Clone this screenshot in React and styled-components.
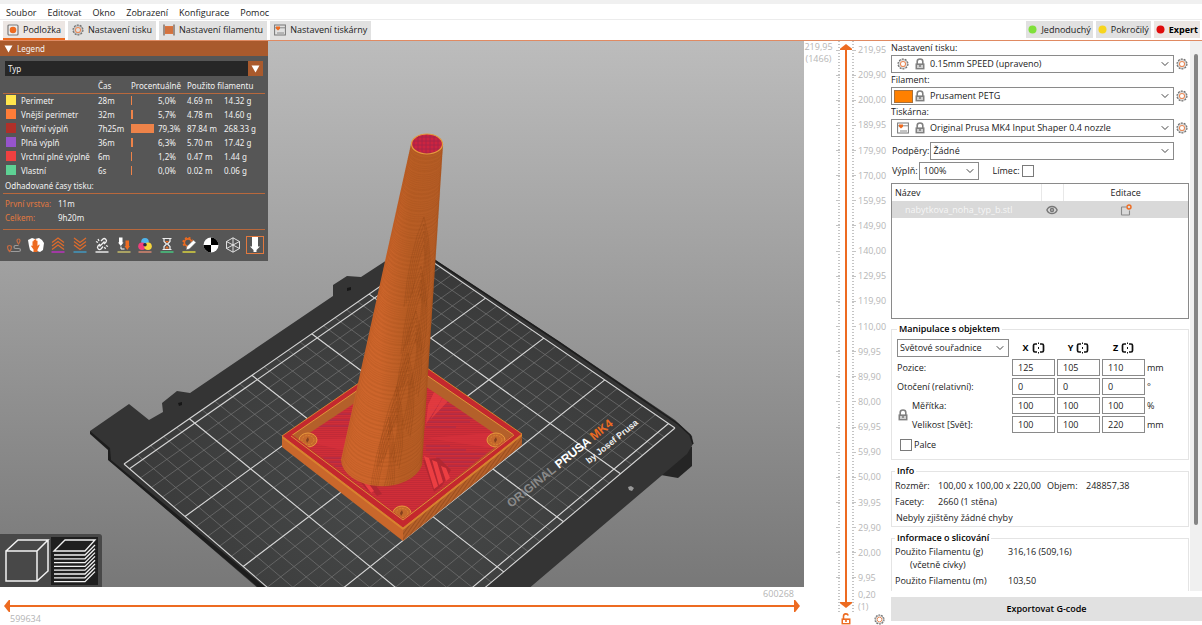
import React, { useState } from 'react';
import styled, { createGlobalStyle, css } from 'styled-components';
import { ChevronDown, Eye } from 'lucide-react';

const orange = '#ed6b21';

const GlobalStyle = createGlobalStyle`
  * { box-sizing: border-box; }
  body {
    margin: 0;
    background: #fff;
    color: #222;
    font-family: 'Open Sans', 'Noto Sans', sans-serif;
    font-size: 9px;
    line-height: 14px;
  }
  button, input, select { font: inherit; color: inherit; margin: 0; }
  button { border: 0; padding: 0; background: none; }
  ul { list-style: none; margin: 0; padding: 0; }
`;

const Page = styled.div`
  display: flex;
  flex-direction: column;
  height: 100vh;
  overflow: hidden;
`;

const TitleStrip = styled.div`
  flex: none;
  height: 4px;
  background: #f0f0f0;
`;

const MenuBar = styled.nav`
  flex: none;
  display: flex;
  gap: 11px;
  height: 16px;
  padding: 2px 6px 0;
  border-bottom: 1px solid #ececec;
  button { height: 13px; }
`;

const TabBar = styled.div`
  flex: none;
  display: flex;
  justify-content: space-between;
  height: 21px;
  padding: 1px 2px 0 3px;
  border-bottom: 1px solid #e08a62;
`;

const TabGroup = styled.div`
  display: flex;
  gap: 3px;
`;

const Tab = styled.button`
  display: flex;
  align-items: center;
  gap: 4px;
  padding: 0 4px;
  height: 19px;
  background: ${p => (p.$active ? '#ece6e3' : '#e1e1e1')};
  border-bottom: 2px solid ${p => (p.$active ? orange : '#e1e1e1')};
`;

const Mode = styled.button`
  display: flex;
  align-items: center;
  gap: 4px;
  height: 17px;
  padding: 0 2px;
  background: ${p => (p.$active ? '#ece6e3' : '#e1e1e1')};
  font-weight: ${p => (p.$active ? 700 : 400)};
  color: ${p => (p.$active ? '#000' : '#222')};
`;

const Body = styled.div`
  flex: 1;
  min-height: 0;
  display: grid;
  grid-template-columns: minmax(0, 1fr) 86px 312px;
`;

/* ---- 3D view ---- */

const ViewColumn = styled.main`
  display: flex;
  flex-direction: column;
  min-height: 0;
`;

const Canvas = styled.div`
  position: relative;
  flex: 1;
  min-height: 0;
  background: linear-gradient(#bcbcbc, #787878);
`;

const SceneSvg = styled.svg`
  display: block;
  width: 100%;
  height: 100%;
`;

const Legend = styled.section`
  position: absolute;
  left: 0;
  top: 0;
  width: 268px;
  padding-bottom: 7px;
  background: #565656;
  color: #f2f2f2;
  font-family: 'Noto Sans', sans-serif;
  font-size: 8px;
`;

const LegendHead = styled.button`
  display: flex;
  align-items: center;
  gap: 4px;
  width: 100%;
  height: 15px;
  padding: 0 4px;
  background: #a95a2d;
`;

const LegendSelect = styled.div`
  display: grid;
  grid-template-columns: 1fr 15px;
  margin: 5px 5px 2px;
  height: 15px;
  background: #272727;
  select {
    grid-area: 1 / 1 / 2 / 3;
    appearance: none;
    border: 0;
    padding: 0 3px;
    background: none;
    outline: none;
  }
  span {
    grid-area: 1 / 2;
    display: grid;
    place-items: center;
    background: #a95a2d;
    pointer-events: none;
  }
`;

const LegendTable = styled.table`
  width: 262px;
  margin: 0 3px;
  table-layout: fixed;
  border-collapse: collapse;
  th, td {
    padding: 0;
    height: 14px;
    line-height: 13px;
    font-weight: 400;
    text-align: left;
    white-space: nowrap;
  }
  thead th {
    border-bottom: 1px solid #b8683c;
    height: 15px;
  }
`;

const Swatch = styled.i`
  display: block;
  width: 10px;
  height: 10px;
  margin-left: 3px;
  background: ${p => p.$color};
`;

const Bar = styled.i`
  display: block;
  height: 9px;
  background: #ee8349;
`;

const LegendRule = styled.h4`
  margin: 0 3px;
  padding: 2px 2px 1px;
  border-bottom: 1px solid #b8683c;
  font-size: 8px;
  font-weight: 400;
  line-height: 13px;
`;

const Times = styled.dl`
  display: grid;
  grid-template-columns: 53px 1fr;
  margin: 0 3px;
  padding: 3px 2px 4px;
  border-bottom: 1px solid #b8683c;
  dt { color: #e2793f; }
  dd { margin: 0; }
`;

const ToolRow = styled.div`
  display: flex;
  justify-content: space-between;
  padding: 6px 4px 0 5px;
`;

const Tool = styled.button`
  display: block;
  width: 18px;
  height: 18px;
  border: 1px solid ${p => (p.$on ? '#e2793f' : 'transparent')};
  svg { display: block; width: 16px; height: 16px; }
`;

const ViewSwitch = styled.div`
  position: absolute;
  left: 0;
  bottom: 0;
  display: flex;
  gap: 1px;
  padding: 3px 4px 2px 3px;
  background: #484848;
  border-top-right-radius: 3px;
`;

const ViewButton = styled.button`
  width: 47px;
  height: 48px;
  background: ${p => (p.$active ? '#1f1f1f' : 'none')};
  svg { display: block; }
`;

const MoveBar = styled.div`
  flex: none;
  display: grid;
  grid-template-rows: 13px 12px 13px;
  padding: 0 4px;
  color: #b4b4b4;
  line-height: 13px;
`;

const MoveLabel = styled.span`
  padding: 0 6px;
  text-align: ${p => p.$align || 'left'};
`;

/* ---- sliders ---- */

const Dual = styled.div`
  display: grid;
  grid-template: 100% / 100%;
  min-height: 0;
  background: linear-gradient(${orange}, ${orange}) center no-repeat;
  background-size: ${p => (p.$vertical ? '2px 98%' : '99% 2px')};
`;

const Range = styled.input`
  grid-area: 1 / 1;
  appearance: none;
  width: 100%;
  height: 100%;
  min-width: 0;
  background: none;
  outline: none;
  pointer-events: none;
  ${p => p.$vertical && css`
    writing-mode: vertical-lr;
    direction: rtl;
  `}
  &::-webkit-slider-thumb {
    appearance: none;
    pointer-events: auto;
    width: ${p => (p.$vertical ? 12 : 6)}px;
    height: ${p => (p.$vertical ? 6 : 12)}px;
    background: ${orange};
    clip-path: ${p => p.$shape};
  }
`;

const shapes = {
  up: 'polygon(0 80%, 50% 0, 100% 80%, 100% 100%, 0 100%)',
  down: 'polygon(0 20%, 0 0, 100% 0, 100% 20%, 50% 100%)',
  left: 'polygon(80% 0, 0 50%, 80% 100%, 100% 100%, 100% 0)',
  right: 'polygon(20% 0, 0 0, 0 100%, 20% 100%, 100% 50%)',
};

const DualRange = ({ label, vertical }) => {
  const [low, setLow] = useState(0);
  const [high, setHigh] = useState(100);
  return (
    <Dual $vertical={vertical}>
      <Range type="range" $vertical={vertical} aria-label={`${label} min`} value={low}
        $shape={vertical ? shapes.down : shapes.left}
        onChange={e => setLow(Math.min(+e.target.value, high))} />
      <Range type="range" $vertical={vertical} aria-label={`${label} max`} value={high}
        $shape={vertical ? shapes.up : shapes.right}
        onChange={e => setHigh(Math.max(+e.target.value, low))} />
    </Dual>
  );
};

const LayerColumn = styled.aside`
  display: grid;
  grid-template-columns: 29px 1fr;
  grid-template-rows: minmax(0, 1fr) 12px;
  color: #b6b6b6;
  line-height: 12px;
`;

const CurrentLayer = styled.div`
  text-align: center;
  line-height: 12px;
`;

const LayerTrack = styled.div`
  display: grid;
  grid-template-columns: 4px 18px 1fr;
  grid-template-rows: 100%;
  min-height: 0;
`;

const TrackSlot = styled.div`
  grid-area: 1 / 2;
  display: grid;
  grid-template: 100% / 12px;
  justify-content: center;
  padding: 3px 0 5px;
  min-height: 0;
  border: solid transparent;
  border-width: 0 1px;
  background:
    repeating-linear-gradient(#c4c4c4 0 1px, transparent 1px 3px) left / 2px 100% no-repeat,
    repeating-linear-gradient(#c4c4c4 0 1px, transparent 1px 3px) right / 2px 100% no-repeat;
`;

const Scale = styled.ul`
  grid-area: 1 / 1 / 2 / 4;
  display: flex;
  flex-direction: column;
  justify-content: space-between;
  padding: 3px 0 29px;
`;

const ScaleItem = styled.li`
  display: grid;
  grid-template-columns: 4px 10px 4px 1fr;
  align-items: center;
  column-gap: 1px;
  padding-left: 3px;
  height: 12px;
  &::before, &::after {
    content: '';
    height: 1px;
    background: #c4c4c4;
  }
  &::before { grid-area: 1 / 1; }
  &::after { grid-area: 1 / 3; }
  span { grid-area: 1 / 4; padding-left: 1px; }
`;

const FirstLayer = styled.div`
  grid-area: 1 / 3;
  align-self: end;
  padding-left: 3px;
`;

const LayerFoot = styled.div`
  grid-column: 2;
  display: flex;
  justify-content: space-between;
  padding: 0 5px 0 7px;
  button { height: 12px; }
  svg { display: block; }
`;

/* ---- settings panel ---- */

const Side = styled.aside`
  display: grid;
  grid-template-rows: minmax(0, 1fr) 24px;
  row-gap: 6px;
  padding: 0 0 4px 1px;
  min-height: 0;
`;

const Scroller = styled.div`
  display: grid;
  grid-template-columns: minmax(0, 1fr) 12px;
  min-height: 0;
`;

const Settings = styled.div`
  overflow: hidden;
`;

const ScrollBar = styled.div`
  padding: 13px 4px 66px;
  background: #f0f0f0;
  i { display: block; height: 100%; background: #858585; border-radius: 2px; }
`;

const PresetLabel = styled.label`
  display: block;
  height: 14px;
`;

const PresetRow = styled.div`
  display: grid;
  grid-template-columns: 1fr 16px;
  align-items: center;
  button { justify-self: center; }
  svg { display: block; }
`;

const SelectBox = styled.div`
  display: grid;
  grid-template-columns: 1fr 14px;
  align-items: center;
  width: ${p => p.$width || 'auto'};
  height: 18px;
  border: 1px solid #8a8a8a;
  background: #fff;
  select {
    grid-area: 1 / 1 / 2 / 3;
    appearance: none;
    width: 100%;
    height: 16px;
    border: 0;
    padding: 0 14px 0 ${p => p.$pad || 2}px;
    background: none;
    outline: none;
  }
  > svg { grid-area: 1 / 2; pointer-events: none; }
`;

const PresetIcons = styled.span`
  grid-area: 1 / 1;
  display: grid;
  grid-template-columns: 20px 14px;
  align-items: center;
  justify-items: center;
  width: 34px;
  pointer-events: none;
  padding-left: 1px;
`;

const Color = styled.i`
  width: 19px;
  height: 13px;
  border: 1px solid #a8703a;
  background: #ff8000;
`;

const OptionRow = styled.div`
  display: flex;
  align-items: center;
  gap: 1px;
  padding: 0 16px 0 1px;
  margin-top: ${p => p.$top}px;
  > div.wide { flex: 1; }
`;

const CheckLabel = styled.label`
  display: flex;
  align-items: center;
  gap: 2px;
  margin-left: ${p => p.$left || 0}px;
`;

const Check = styled.input`
  appearance: none;
  width: 12px;
  height: 12px;
  border: 1px solid #7a7a7a;
  background: #fff;
  &:checked { background: ${orange}; }
`;

const ObjectList = styled.div`
  height: 136px;
  margin: 3px 1px 0 0;
  border: 1px solid #8a8a8a;
  table { width: 100%; table-layout: fixed; border-collapse: collapse; }
  th, td { height: 17px; padding: 0; line-height: 16px; text-align: center; font-weight: 400; }
  th + th { border-left: 1px solid #e8e8e8; }
  th:first-child, td:first-child { text-align: left; padding-left: 3px; }
  tbody { background: #d9d9d9; }
  tbody td:first-child { padding-left: 13px; color: #f6f6f6; }
  svg { vertical-align: middle; }
`;

const Group = styled.fieldset`
  margin: ${p => p.$top}px 1px 0 0;
  padding: 0 4px ${p => p.$bottom}px 3px;
  min-width: 0;
  border: 1px solid #e4e4e4;
  legend {
    padding: 0 2px;
    margin-left: ${p => p.$indent || 0}px;
    font-weight: 600;
    color: #000;
    height: 14px;
  }
`;

const Transform = styled.div`
  display: grid;
  grid-template-columns: 13px 98px repeat(3, 43px) 1fr;
  grid-template-rows: 18px repeat(4, 17px);
  gap: 2px;
  align-items: center;
  padding: 3px 0 0 2px;
  input { width: 100%; height: 17px; border: 1px solid #8a8a8a; padding: 0 5px; outline: none; }
`;

const Wide = styled.div`
  grid-column: 1 / 3;
`;

const Axis = styled.button`
  display: flex;
  align-items: center;
  gap: 3px;
  justify-content: center;
  font-weight: 700;
  color: #000;
`;

const LockCell = styled.button`
  grid-column: 1;
  grid-row: 4 / 6;
  svg { display: block; }
`;

const Facts = styled.dl`
  display: grid;
  grid-template-columns: ${p => p.$cols};
  margin: 0;
  line-height: ${p => p.$line}px;
  dd, dt { margin: 0; white-space: nowrap; }
`;

const Note = styled.p`
  margin: 0 0 0 ${p => p.$left}px;
  line-height: ${p => p.$line}px;
`;

const Export = styled.button`
  background: #e1e1e1;
  font-weight: 600;
  color: #000;
`;

/* ---- icons ---- */

const Gear = ({ size = 13 }) => (
  <svg width={size} height={size} viewBox="0 0 16 16" fill="none">
    <circle cx="8" cy="8" r="6.6" stroke="#6e6e6e" strokeWidth="1.6" strokeDasharray="2.6 1.5" />
    <circle cx="8" cy="8" r="5.6" stroke="#808080" strokeWidth="0.9" />
    <circle cx="8" cy="8" r="3.4" stroke="#e98a58" strokeWidth="1.4" />
  </svg>
);

const Lock = ({ color = '#808080', open }) => (
  <svg width="12" height="12" viewBox="0 0 12 12" fill="none">
    <path d={open ? 'M3.5 6V3.2A2.4 2.4 0 0 1 8.2 2.6' : 'M3.2 6V3.4a2.8 2.4 0 0 1 5.6 0V6'} stroke={color} strokeWidth="1.6" />
    <path d="M1.5 5.4h9v6h-9z" fill={color} />
    <path d="M3 7h6v3H3z" fill={open ? '#fff' : '#cfcfcf'} />
    <path d="M5.2 7h1.6v2H5.2z" fill={color} />
  </svg>
);

const BedIcon = () => (
  <svg width="12" height="12" viewBox="0 0 12 12">
    <rect x="1" y="1" width="10" height="10" rx="1" fill="#eee" stroke="#7a7a7a" strokeWidth="1.2" />
    <circle cx="6" cy="6" r="3.3" fill={orange} />
  </svg>
);

const SpoolIcon = () => (
  <svg width="12" height="12" viewBox="0 0 12 12">
    <path d="M1 .5v11M11 .5v11" stroke="#8a7a70" strokeWidth="1.6" />
    <rect x="2" y="2" width="8" height="8" fill="#dd7741" />
    <path d="M2 4h8M2 6h8M2 8h8" stroke="#b8683c" strokeWidth=".6" />
  </svg>
);

const PrinterIcon = () => (
  <svg width="12" height="12" viewBox="0 0 12 12" fill="none">
    <rect x=".6" y="1" width="10.8" height="10" stroke="#777" strokeWidth="1" />
    <path d="M.6 3.8h10.8M3 9h7" stroke="#888" strokeWidth="1" />
    <path d="M2 2.4h4v2.4L4 6.6 2 4.8z" fill={orange} />
  </svg>
);

const MirrorIcon = () => (
  <svg width="13" height="12" viewBox="0 0 13 12" fill="none" stroke="#111">
    <path d="M5 2H3Q1.500 2 1.500 3.500v5Q1.500 10 3 10h2M8 2h2q1.500 0 1.500 1.500v5Q11.500 10 10 10H8" strokeWidth="1.700" />
    <path d="M6.500 .5v1.500M6.500 5v2M6.500 10v1.500" strokeWidth="1" />
  </svg>
);

const EditIcon = () => (
  <svg width="12" height="12" viewBox="0 0 12 12" fill="none">
    <path d="M6.500 3H2q-.5 0-.5.500v7q0 .5.500.5h7q.5 0 .5-.5V6.500" stroke="#8a8a8a" strokeWidth="1.100" />
    <circle cx="9" cy="3" r="2" stroke={orange} strokeWidth="1.400" />
  </svg>
);

const Triangle = () => (
  <svg width="9" height="8" viewBox="0 0 9 8"><path d="M.5.5h8L4.500 7.500z" fill="#fff" /></svg>
);

const Underline = ({ color }) => <path d="M1.500 15h13" stroke={color} strokeWidth="1.400" />;

const tools = [
  ['Travel', <g fill="none" stroke="#9c9c9c" strokeWidth="1.200">
    <path d="M4.500 14.500h8q2 0 2-1.500t-2-1.500h-3q-1.500 0-1.500-1.500t1.500-1.500h3" />
    <path d="M3.500 14.500C1 11.500.8 8.500 3.500 8.500s2.500 3 0 6zM12.500 7c-2-2.500-2-5 0-5s2 2.500 0 5z" stroke="#c46a42" />
  </g>],
  ['Wipe', <g>
    <path d="M0 3l4-2 3 1 4-1 3 2 2 3-1 7-3 2-3-1-4 1-3-2-1-4z" fill="#fff" />
    <path d="M4.500 9V4.500q.7-.8 1.200 0V3q.8-.8 1.300 0v-.5q.8-.8 1.300 0V4q.8-.8 1.200 0v5l1.500-1.500q1 0 .5 1L9.500 12.500V15h-4v-2.500L3 9q.5-1 1.500 0z" fill={orange} />
  </g>],
  ['Retractions', <g>
    <path d="M2 5.500L8 1l6 4.500M2 9L8 4.500 14 9M2 12.500L8 8l6 4.500" fill="none" stroke="#dd6b2c" strokeWidth="1.300" />
    <Underline color="#c22fc4" />
  </g>],
  ['Deretractions', <g>
    <path d="M2 1l6 4.500L14 1M2 4.500L8 9l6-4.500M2 8l6 4.500L14 8" fill="none" stroke="#dd6b2c" strokeWidth="1.300" />
    <Underline color="#3f9dc8" />
  </g>],
  ['Seams', <g>
    <g fill="none" stroke="#f2f2f2" strokeWidth="1.300">
      <path d="M7 4l2-2c1.600-1.400 4.600 1 3 3l-2 2M9 9.500L7 12c-2 1.600-4.600-1-3-3l2-2M5.500 9.500l5-5" />
      <path d="M4 2l1 2M2 4.500l2 1M11.500 12l-1-2M14 9.500l-2-1" />
    </g>
    <Underline color="#f2f2f2" />
  </g>],
  ['Tool changes', <g>
    <path d="M3 .5h3.500v5h1L4.800 9 2 5.500h1z" fill="#fff" />
    <path d="M9.500 3.500H13v5.500h1l-2.700 4L8.500 9h1z" fill={orange} />
    <path d="M5 9.500v2.500h3.500" stroke="#fff" fill="none" />
    <Underline color="#cfc36a" />
  </g>],
  ['Color changes', <g>
    <circle cx="8" cy="4.800" r="3.800" fill="#4fb4ec" />
    <circle cx="5" cy="9.200" r="3.800" fill="#ef3f7c" />
    <circle cx="11" cy="9.200" r="3.800" fill="#f6d53c" />
    <circle cx="8" cy="7.700" r="1.800" fill="#2b2440" />
    <Underline color="#e08a72" />
  </g>],
  ['Pause', <g>
    <path d="M3.500 1.500h9M3.500 12.500h9M5 2v2.500L7.500 7 5 9.500V12M11 2v2.500L8.500 7 11 9.500V12" stroke="#eee" strokeWidth="1.200" fill="none" />
    <path d="M6 4h4L8 6zM6 11.500L8 9l2 2.500z" fill={orange} />
    <Underline color="#45cf83" />
  </g>],
  ['Custom G-code', <g>
    <circle cx="7" cy="5.500" r="3.600" stroke={orange} strokeWidth="1.600" fill="none" />
    <circle cx="7" cy="5.500" r="4.800" stroke={orange} strokeWidth="1.600" strokeDasharray="2 1.770" fill="none" />
    <path d="M5 13l.8-3.500L12.500 3l2.500 2.500L8.500 12z" fill="#fff" stroke="#565656" strokeWidth=".6" />
    <Underline color="#e3dc3e" />
  </g>],
  ['Center of gravity', <g>
    <circle cx="8" cy="8" r="7.500" fill="#fff" />
    <path d="M8 8V.5A7.500 7.500 0 0 1 15.500 8zM8 8v7.500A7.500 7.500 0 0 1 .5 8z" fill="#000" />
  </g>],
  ['Shells', <path d="M8 .8l6.500 3.700v7L8 15.200l-6.500-3.700v-7zM8 .8v14.400M1.500 4.500l13 7M14.500 4.500l-13 7" fill="none" stroke="#eee" strokeWidth=".9" />],
  ['Tool marker', <path d="M5 0h6v9.500h2L9.500 13v2h-3v-2L3 9.500h2z" fill="#fff" />],
];

/* ---- scene ---- */

// bed corners on the canvas: front left, front right, back right, back left
const corners = [[375, 680], [675, 428], [424, 256], [124, 464]];

const makeProjection = ([a, b, c, d]) => {
  const dx1 = b[0] - c[0], dx2 = d[0] - c[0], sx = a[0] - b[0] + c[0] - d[0];
  const dy1 = b[1] - c[1], dy2 = d[1] - c[1], sy = a[1] - b[1] + c[1] - d[1];
  const det = dx1 * dy2 - dx2 * dy1;
  const g = (sx * dy2 - dx2 * sy) / det;
  const h = (dx1 * sy - sx * dy1) / det;
  return (x, y) => {
    const u = x / 250, v = y / 210;
    const w = g * u + h * v + 1;
    return [
      ((b[0] - a[0] + g * b[0]) * u + (d[0] - a[0] + h * d[0]) * v + a[0]) / w,
      ((b[1] - a[1] + g * b[1]) * u + (d[1] - a[1] + h * d[1]) * v + a[1]) / w,
    ].map(n => n.toFixed(1));
  };
};

const project = makeProjection(corners);
const seg = (x1, y1, x2, y2) => `M${project(x1, y1)}L${project(x2, y2)}`;
const range = (n, fn) => Array.from({ length: n }, (_, i) => fn(i));

const thinGrid = [
  ...range(24, i => seg((i + 1) * 10, 0, (i + 1) * 10, 210)),
  ...range(20, i => seg(0, 5 + i * 10, 250, 5 + i * 10)),
].join('');
const boldGrid = [
  ...range(6, i => seg(i * 50, 0, i * 50, 210)),
  ...range(5, i => seg(0, 5 + i * 50, 250, 5 + i * 50)),
  seg(0, 0, 250, 0), seg(0, 210, 250, 210),
].join('');

// one printed layer of the leg every few pixels, 0 is the tip
const layerLine = t => {
  const y = 144 + t * 318;
  const l = 411 - t * 70, r = 443 - t * 21;
  return `M${l.toFixed(1)} ${y.toFixed(1)}A${((r - l) / 2).toFixed(1)} ${(10 + t * 17).toFixed(1)} 0 0 0 ${r.toFixed(1)} ${y.toFixed(1)}`;
};
const layers = range(160, i => layerLine(i / 160)).join('');

// wood-like drops stacked up the leg, each with a few nested rings
const drops = [[384, 468, 46], [392, 436, 42], [403, 403, 44], [411, 362, 46], [416, 318, 48], [419, 270, 50]];
const grain = drops.map(([x, y, h]) => range(5, k => {
  const w = 2 + k * 2, up = h / 2 + k * 7, down = h / 2 + k * 3;
  return `M${x - 5 - w} ${y + down}Q${x - w} ${y - up / 3} ${x + 5} ${y - up}Q${x + 6 + w} ${y - up / 4} ${x - 3 + w} ${y + down}`;
}).join('')).join('');

const Screw = ({ x, y }) => (
  <g>
    <ellipse cx={x} cy={y} rx="9" ry="7" fill="#c4682c" stroke="#e8983c" />
    <ellipse cx={x} cy={y} rx="6" ry="4.500" fill="none" stroke="#d9822f" strokeDasharray="2 1" />
    <path d={`M${x - 1} ${y + 3}l-1-3 2-3 1 3z`} fill="#84401f" />
  </g>
);

const Scene = () => (
  <SceneSvg viewBox="0 41 804 546" preserveAspectRatio="xMidYMid slice" role="img" aria-label="Náhled tisku">
    <defs>
      <linearGradient id="leg" x1="0" x2="1" y1="0" y2=".12">
        <stop offset="0" stopColor="#cf652c" />
        <stop offset=".45" stopColor="#cd652b" />
        <stop offset=".7" stopColor="#b85d24" />
        <stop offset="1" stopColor="#b45c25" />
      </linearGradient>
      <radialGradient id="bed" cx=".5" cy=".55" r=".6">
        <stop offset="0" stopColor="#474949" />
        <stop offset="1" stopColor="#373737" />
      </radialGradient>
      <pattern id="infill" width="4" height="2" patternUnits="userSpaceOnUse">
        <rect width="4" height="2" fill="#d02e38" />
        <path d="M0 .5h4" stroke="#bc2836" strokeWidth=".7" />
      </pattern>
      <pattern id="wall" width="3" height="4" patternUnits="userSpaceOnUse" patternTransform="rotate(35)">
        <rect width="3" height="4" fill="#b4602a" />
        <path d="M.5 0v4" stroke="#954a1c" strokeWidth=".8" />
      </pattern>
      <pattern id="tip" width="4" height="4" patternUnits="userSpaceOnUse">
        <rect width="4" height="4" fill="#cc2440" />
        <path d="M0 1h4M2 0v4" stroke="#a02248" strokeWidth=".8" />
      </pattern>
      <clipPath id="recess"><path d="M299 440L403 371 504 440 403 516z" /></clipPath>
      <clipPath id="legClip"><path d="M411 144L341 460A41 27 0 0 0 422 465L443 144z" /></clipPath>
    </defs>

    <path d="M655 474l4-10 28-20 5 3v19l-14 12z" fill="#252525" />
    <path d="M90 431L129 404 149 420 163 412 162 403 177 391 190 393 333 296 333 285 347 276 361 277 410 245 434 259 560 342 675 420 692 436 693 444 687 454 527 590H260L109 460 110 449 91 434z" fill="#343434" />
    <path d="M90 431l20 17 1 12 155 128h-7L108 460v-10L90 434z" fill="#1d1d1d" />
    <path d="M434 260L560 343 678 424 690 435 693 444" fill="none" stroke="#1e1e1e" strokeWidth="1.500" />
    <path d={`M${corners.join('L')}z`} fill="url(#bed)" />
    <path d={thinGrid} stroke="#747474" strokeWidth=".7" fill="none" />
    <path d={boldGrid} stroke="#d4d4d4" strokeWidth="1.100" fill="none" />
    <path d="M178 403l4-1v3l-3 1zM347 288l4-1v3l-4 1z" fill="#161616" />
    <path d="M628 487l3-1 3 2-2 3-3-1z" fill="#999" />

    <text transform="translate(511 508) rotate(-39)" fontFamily="Liberation Sans, sans-serif" fontSize="12" fontWeight="700" fill="#fff">
      <tspan fill="#8a8a8a">ORIGINAL</tspan> <tspan>PRUSA</tspan> <tspan fill={orange}>MK4</tspan>
    </text>
    <text transform="translate(589 464) rotate(-39)" fontFamily="Liberation Sans, sans-serif" fontSize="9" fontWeight="700" fill="#eee">by Josef Prusa</text>

    {/* base plate */}
    <path d="M282 436v11l121 94v-13z" fill="#c9672b" />
    <path d="M403 528v13l119-96v-11z" fill="url(#wall)" />
    <path d="M282 436L404 352 522 434 403 528z" fill="#c4282e" stroke="#d9822f" />
    <path d="M291 436L403 359 514 435 403 522z" fill="#b4602a" stroke="#e0963a" />
    <path d="M299 440L403 371 504 440 403 520z" fill="url(#infill)" />
    <g clipPath="url(#recess)">
      <path d="M324 414h40M318 420h44M312 426h50M440 402h24M434 406h36M430 410h46M428 414h54M427 418h50M426 422h44M426 427h30M426 446h24M426 450h40M430 454h60M436 458h50M442 462h40M448 466h30M320 458h24M326 462h22M332 466h20" stroke="#a02c50" strokeWidth=".9" />
      <path d="M426 424L428 405 436 388 447 388 440 402zM430 420L446 392 453 396z" fill="#e83f42" opacity=".75" />
      <path d="M423 460l16-2 12 12-9 16-8 6zM356 476l6-2 12 16-4 4zM366 482l6-2 10 14-5 2z" fill="#a82631" opacity=".7" />
      <path d="M424 456l5 2 9 28-4 3zM432 460l5 2 6 20-4 3zM441 466l5 2 4 10-4 3zM360 478l4-1 10 14-3 2z" fill="#ec3e42" />
      <path d="M426 438l76-6-10 16zM300 440l50-2v14z" fill="#d8323c" opacity=".6" />
    </g>
    <Screw x={308} y={440} />
    <Screw x={496} y={440} />
    <Screw x={402} y={513} />
    <path d="M282 436l121 92 119-94v2L403 530 282 438z" fill="#d9822f" />
    <path d="M286 436l117 88 115-89-4-1-111 85-112-85z" fill="#c4282e" />
    <path d="M291 436l112 84 111-85" fill="none" stroke="#dda03c" strokeWidth=".9" />

    {/* leg */}
    <path d="M411 144L341 460A41 27 0 0 0 422 465L443 144z" fill="url(#leg)" />
    <path d={layers} fill="none" stroke="#8a4317" strokeWidth=".5" opacity=".3" />
    <g clipPath="url(#legClip)">
      <path d={grain} fill="none" stroke="#7c3c12" strokeWidth=".8" opacity=".28" />
    </g>
    <ellipse cx="427" cy="144" rx="15.500" ry="10" fill="url(#tip)" stroke="#e59a3c" strokeWidth="1.200" />
  </SceneSvg>
);

/* ---- data ---- */

const features = [
  ['Perimetr', '28m', 1, '5,0%', '4.69 m', '14.32 g', '#ffe64d'],
  ['Vnější perimetr', '32m', 2, '5,7%', '4.78 m', '14.60 g', '#ff7d38'],
  ['Vnitřní výplň', '7h25m', 23, '79,3%', '87.84 m', '268.33 g', '#b03029'],
  ['Plná výplň', '36m', 2, '6,3%', '5.70 m', '17.42 g', '#9654cc'],
  ['Vrchní plné výplně', '6m', 1, '1,2%', '0.47 m', '1.44 g', '#f04040'],
  ['Vlastní', '6s', 1, '0,0%', '0.02 m', '0.06 g', '#5ed194'],
];

const heights = [
  '219,95', '209,90', '200,00', '189,95', '179,90', '170,00', '159,95', '149,90',
  '140,00', '129,95', '119,90', '110,00', '99,95', '89,90', '80,00', '69,95',
  '59,90', '50,00', '39,95', '29,90', '20,00', '9,95',
];

const presets = [
  { id: 'print', label: 'Nastavení tisku:', value: '0.15mm SPEED (upraveno)', icon: <Gear size={12} /> },
  { id: 'filament', label: 'Filament:', value: 'Prusament PETG', icon: <Color /> },
  { id: 'printer', label: 'Tiskárna:', value: 'Original Prusa MK4 Input Shaper 0.4 nozzle', icon: <PrinterIcon /> },
];

const transformRows = [
  { label: 'Pozice:', values: [125, 105, 110], unit: 'mm' },
  { label: 'Otočení (relativní):', values: [0, 0, 0], unit: '°' },
  { label: 'Měřítka:', values: [100, 100, 100], unit: '%', locked: true },
  { label: 'Velikost [Svět]:', values: [100, 100, 220], unit: 'mm', locked: true },
];

const Chevron = () => <ChevronDown size={12} color="#444" strokeWidth={2} />;

const Preset = ({ id, label, value, icon }) => (
  <>
    <PresetLabel htmlFor={id}>{label}</PresetLabel>
    <PresetRow>
      <SelectBox $pad={38}>
        <PresetIcons>{icon}<Lock /></PresetIcons>
        <select id={id}><option>{value}</option></select>
        <Chevron />
      </SelectBox>
      <button aria-label={`Upravit ${label}`}><Gear size={12} /></button>
    </PresetRow>
  </>
);

const LegendPanel = () => (
  <Legend>
    <LegendHead><Triangle />Legend</LegendHead>
    <LegendSelect>
      <select aria-label="Legend"><option>Typ</option></select>
      <span><Triangle /></span>
    </LegendSelect>
    <LegendTable>
      <colgroup>
        <col style={{ width: 18 }} /><col style={{ width: 77 }} /><col style={{ width: 33 }} />
        <col style={{ width: 27 }} /><col style={{ width: 29 }} /><col style={{ width: 37 }} /><col />
      </colgroup>
      <thead>
        <tr><th /><th /><th>Čas</th><th colSpan="2">Procentuálně</th><th colSpan="2">Použito filamentu</th></tr>
      </thead>
      <tbody>
        {features.map(([name, time, bar, pct, length, weight, color]) => (
          <tr key={name}>
            <td><Swatch $color={color} /></td>
            <th scope="row">{name}</th>
            <td>{time}</td>
            <td><Bar style={{ width: bar }} /></td>
            <td>{pct}</td>
            <td>{length}</td>
            <td>{weight}</td>
          </tr>
        ))}
      </tbody>
    </LegendTable>
    <LegendRule>Odhadované časy tisku:</LegendRule>
    <Times>
      <dt>První vrstva:</dt><dd>11m</dd>
      <dt>Celkem:</dt><dd>9h20m</dd>
    </Times>
    <ToolRow>
      {tools.map(([name, icon]) => (
        <Tool key={name} aria-label={name} $on={name === 'Tool marker'}>
          <svg viewBox="0 0 16 16">{icon}</svg>
        </Tool>
      ))}
    </ToolRow>
  </Legend>
);

const ViewButtons = () => (
  <ViewSwitch>
    <ViewButton aria-label="3D editor">
      <svg width="47" height="48" viewBox="0 0 47 48" fill="none" stroke="#f2f2f2" strokeWidth="1.500">
        <path d="M3 14h31v30H3zM3 14L15 3h30L34 14M45 3v31L34 44" />
      </svg>
    </ViewButton>
    <ViewButton aria-label="Náhled" $active>
      <svg width="47" height="48" viewBox="0 0 47 48" fill="none" stroke="#f2f2f2" strokeWidth="1.300">
        <path d="M3 14L14 3h30L34 14z" />
        {range(8, i => <path key={i} d={`M3 ${18 + i * 3.8}h31l10-10`} />)}
      </svg>
    </ViewButton>
  </ViewSwitch>
);

const LayerSlider = () => (
  <LayerColumn>
    <CurrentLayer>219,95<br />(1466)</CurrentLayer>
    <LayerTrack>
      <Scale>
        {heights.map(h => <ScaleItem key={h}><span>{h}</span></ScaleItem>)}
      </Scale>
      <TrackSlot><DualRange vertical label="Vrstva" /></TrackSlot>
      <FirstLayer>0,20<br />(1)</FirstLayer>
    </LayerTrack>
    <LayerFoot>
      <button aria-label="Zámek"><Lock color={orange} open /></button>
      <button aria-label="Nastavení"><Gear size={11} /></button>
    </LayerFoot>
  </LayerColumn>
);

const Manipulation = () => (
  <Group $top={3} $bottom={7} $indent={2}>
    <legend>Manipulace s objektem</legend>
    <Transform>
      <Wide>
        <SelectBox $width="112px">
          <select aria-label="Souřadnice"><option>Světové souřadnice</option></select>
          <Chevron />
        </SelectBox>
      </Wide>
      {['X', 'Y', 'Z'].map(a => <Axis key={a} aria-label={`Zrcadlit ${a}`}>{a}<MirrorIcon /></Axis>)}
      <span />
      <LockCell aria-label="Zamknout poměr"><Lock /></LockCell>
      {transformRows.map(({ label, values, unit, locked }) => (
        <React.Fragment key={label}>
          {locked ? <span>{label}</span> : <Wide>{label}</Wide>}
          {values.map((v, i) => <input key={i} type="text" aria-label={`${label} ${'XYZ'[i]}`} defaultValue={v} />)}
          <span>{unit}</span>
        </React.Fragment>
      ))}
    </Transform>
    <OptionRow $top={5}>
      <CheckLabel $left={4}><Check type="checkbox" />Palce</CheckLabel>
    </OptionRow>
  </Group>
);

const App = () => (
  <>
    <GlobalStyle />
    <Page>
      <TitleStrip />
      <MenuBar>
        {['Soubor', 'Editovat', 'Okno', 'Zobrazení', 'Konfigurace', 'Pomoc'].map(m => <button key={m}>{m}</button>)}
      </MenuBar>
      <TabBar>
        <TabGroup>
          <Tab $active><BedIcon />Podložka</Tab>
          <Tab><Gear size={12} />Nastavení tisku</Tab>
          <Tab><SpoolIcon />Nastavení filamentu</Tab>
          <Tab><PrinterIcon />Nastavení tiskárny</Tab>
        </TabGroup>
        <TabGroup>
          {[['Jednoduchý', '#7fe03a'], ['Pokročilý', '#f7d51d'], ['Expert', '#e00b0b']].map(([name, color]) => (
            <Mode key={name} $active={name === 'Expert'}>
              <svg width="9" height="9" viewBox="0 0 9 9"><circle cx="4.500" cy="4.500" r="4" fill={color} /></svg>
              {name}
            </Mode>
          ))}
        </TabGroup>
      </TabBar>
      <Body>
        <ViewColumn>
          <Canvas>
            <Scene />
            <LegendPanel />
            <ViewButtons />
          </Canvas>
          <MoveBar>
            <MoveLabel $align="right">600268</MoveLabel>
            <DualRange label="Pohyb" />
            <MoveLabel>599634</MoveLabel>
          </MoveBar>
        </ViewColumn>
        <LayerSlider />
        <Side>
          <Scroller>
            <Settings>
              {presets.map(p => <Preset key={p.id} {...p} />)}
              <OptionRow $top={5}>
                <label htmlFor="supports">Podpěry:</label>
                <SelectBox className="wide">
                  <select id="supports"><option>Žádné</option></select>
                  <Chevron />
                </SelectBox>
              </OptionRow>
              <OptionRow $top={2}>
                <label htmlFor="infill-density">Výplň:</label>
                <SelectBox $width="60px" $pad={4}>
                  <select id="infill-density"><option>100%</option></select>
                  <Chevron />
                </SelectBox>
                <CheckLabel $left={13}>Límec:<Check type="checkbox" /></CheckLabel>
              </OptionRow>
              <ObjectList>
                <table>
                  <colgroup><col /><col style={{ width: 22 }} /><col style={{ width: 125 }} /></colgroup>
                  <thead><tr><th>Název</th><th /><th>Editace</th></tr></thead>
                  <tbody>
                    <tr>
                      <td>nabytkova_noha_typ_b.stl</td>
                      <td><Eye size={12} color="#777" strokeWidth={3} /></td>
                      <td><EditIcon /></td>
                    </tr>
                  </tbody>
                </table>
              </ObjectList>
              <Manipulation />
              <Group $top={4} $bottom={0}>
                <legend>Info</legend>
                <Facts $cols="43px 109px 39px 1fr" $line={16}>
                  <dt>Rozměr:</dt><dd>100,00 x 100,00 x 220,00</dd><dt>Objem:</dt><dd>248857,38</dd>
                  <dt>Facety:</dt><dd>2660 (1 stěna)</dd>
                </Facts>
                <Note $left={1} $line={16}>Nebyly zjištěny žádné chyby</Note>
              </Group>
              <Group $top={4} $bottom={12}>
                <legend>Informace o slicování</legend>
                <Facts $cols="113px 1fr" $line={14}>
                  <dt>Použito Filamentu (g)</dt><dd>316,16 (509,16)</dd>
                </Facts>
                <Note $left={15} $line={12}>(včetně cívky)</Note>
                <Facts $cols="113px 1fr" $line={20}>
                  <dt>Použito Filamentu (m)</dt><dd>103,50</dd>
                </Facts>
              </Group>
            </Settings>
            <ScrollBar><i /></ScrollBar>
          </Scroller>
          <Export>Exportovat G-code</Export>
        </Side>
      </Body>
    </Page>
  </>
);

export default App;
